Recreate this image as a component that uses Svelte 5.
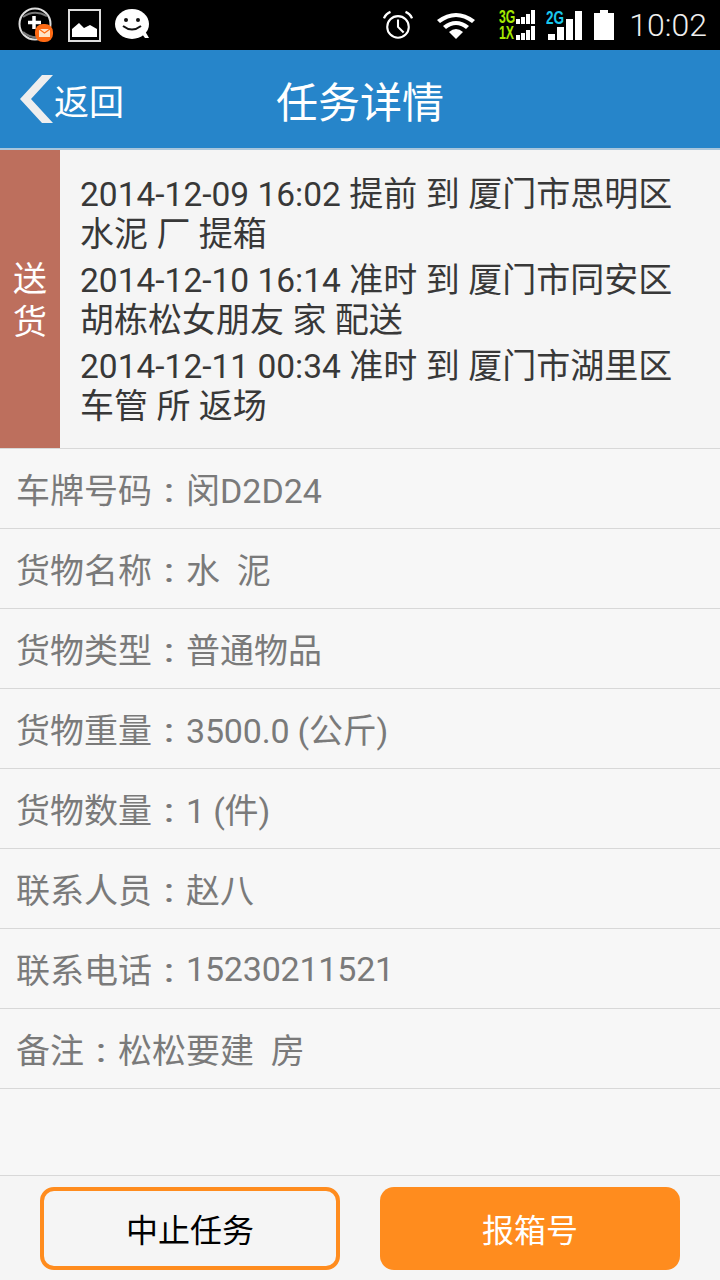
<script>
  const stops = [
    { time: '2014-12-09 16:02', first: ' 提前 到 厦门市思明区', second: '水泥 厂 提箱' },
    { time: '2014-12-10 16:14', first: ' 准时 到 厦门市同安区', second: '胡栋松女朋友 家 配送' },
    { time: '2014-12-11 00:34', first: ' 准时 到 厦门市湖里区', second: '车管 所 返场' }
  ];

  const rows = [
    { label: '车牌号码', value: '闵D2D24' },
    { label: '货物名称', value: '水  泥' },
    { label: '货物类型', value: '普通物品' },
    { label: '货物重量', value: '3500.0 (公斤)', tight: true },
    { label: '货物数量', value: '1 (件)', tight: true },
    { label: '联系人员', value: '赵八' },
    { label: '联系电话', value: '15230211521', tight: true },
    { label: '备注', value: '松松要建  房' }
  ];
</script>

<div class="screen">
  <div class="statusbar">
    <div class="status-left">
      <svg width="36" height="36" viewBox="0 0 36 36">
        <circle cx="17" cy="17" r="15.500" fill="none" stroke="#ddd" stroke-width="2" />
        <path d="M5 10Q16 2 29 9" fill="none" stroke="#777" stroke-width="2" />
        <path d="M5 25Q14 33 27 29" fill="none" stroke="#777" stroke-width="2" />
        <path d="M16 9v13M10 15.500h13" stroke="#fff" stroke-width="3.500" />
        <rect x="17" y="17" width="18" height="18" rx="8" fill="#ff6a13" />
        <rect x="21" y="22" width="11" height="8" fill="#ffe3c8" />
        <path d="M21 22l5.500 4 5.500-4" fill="none" stroke="#ff6a13" stroke-width="1.200" />
      </svg>
      <svg width="33" height="33" viewBox="0 0 33 33">
        <rect x="1" y="1" width="31" height="31" fill="none" stroke="#ddd" stroke-width="2" />
        <path d="M4 28V20l7-6 5 5 6-3 7 4v8z" fill="#fff" />
      </svg>
      <svg width="36" height="32" viewBox="0 0 36 32">
        <ellipse cx="17" cy="15" rx="17" ry="15" fill="#fff" />
        <path d="M27 25l3 4h4l-4-7z" fill="#fff" />
        <circle cx="11" cy="11" r="2" fill="#111" />
        <circle cx="23" cy="11" r="2" fill="#111" />
        <path d="M8 17q9 7 18 0" fill="none" stroke="#111" stroke-width="2" />
      </svg>
    </div>
    <div class="status-right">
      <svg class="alarm" width="30" height="30" viewBox="0 0 32 32">
        <circle cx="16" cy="18" r="11.500" fill="none" stroke="#fff" stroke-width="2.200" />
        <path d="M16 10v8l6 6" fill="none" stroke="#fff" stroke-width="2.200" />
        <path d="M1 9Q3 4 8 2M31 9Q29 4 24 2" fill="none" stroke="#fff" stroke-width="2.500" />
      </svg>
      <svg class="wifi" width="38" height="28" viewBox="0 0 38 28">
        <path d="M0 9Q19-5 38 9l-3 3Q19 0 3 12z" fill="#fff" />
        <path d="M6 15Q19 5 32 15l-3 3Q19 10 9 18z" fill="#fff" />
        <path d="M12 21Q19 15 26 21l-7 7z" fill="#fff" />
      </svg>
      <div class="net">
        <div class="net-row">
          <span class="net-label green">3G</span>
          <i class="b1"></i><i class="b2"></i><i class="b3"></i><i class="b4"></i>
        </div>
        <div class="net-row">
          <span class="net-label green">1X</span>
          <i class="b1"></i><i class="b2"></i><i class="b3"></i><i class="b4"></i>
        </div>
      </div>
      <div class="net2">
        <span class="net-label cyan">2G</span>
        <div class="bars">
          <i class="h1"></i><i class="h2"></i><i class="h3"></i><i class="h4"></i>
        </div>
      </div>
      <div class="battery"></div>
      <span class="clock">10:02</span>
    </div>
  </div>

  <header class="topbar">
    <div class="back">
      <svg width="34" height="48" viewBox="0 0 34 48">
        <path d="M33 0H22L0 24l22 24h11L11 24z" fill="#eeeeee" />
      </svg>
      <span>返回</span>
    </div>
    <h1>任务详情</h1>
  </header>

  <section class="summary">
    <div class="tag"><span>送</span><span>货</span></div>
    <div class="stops">
      {#each stops as stop}
        <p><span class="time">{stop.time}</span>{stop.first}<br />{stop.second}</p>
      {/each}
    </div>
  </section>

  <ul class="rows">
    {#each rows as row}
      <li>{row.label}<span class="colon">：</span><span class:tight={row.tight}>{row.value}</span></li>
    {/each}
  </ul>

  <footer class="actions">
    <button class="outline">中止任务</button>
    <button class="solid">报箱号</button>
  </footer>
</div>

<style>
  :global(body) {
    background: #f7f7f7;
  }

  .screen {
    width: 720px;
    height: 1280px;
    display: flex;
    flex-direction: column;
    background: #f7f7f7;
    font-family: Roboto, "Noto Sans CJK SC", sans-serif;
    overflow: hidden;
  }

  .statusbar {
    height: 50px;
    flex: none;
    background: #000;
    display: flex;
    justify-content: space-between;
    align-items: center;
    padding: 0 13px 0 18px;
  }

  .status-left, .status-right {
    display: flex;
    align-items: center;
  }

  .status-left {
    gap: 14px;
  }

  .alarm {
    margin-right: 24px;
  }

  .wifi {
    margin-right: 24px;
  }

  .net {
    display: flex;
    flex-direction: column;
    gap: 2px;
    margin-right: 10px;
  }

  .net-row {
    height: 14px;
    width: 37px;
    display: flex;
    align-items: flex-end;
    gap: 1px;
    padding-left: 17px;
    box-sizing: border-box;
    position: relative;
  }

  .net-row i {
    width: 4px;
    background: #fff;
  }

  .b1 { height: 5px; }
  .b2 { height: 7px; }
  .b3 { height: 10px; }
  .b4 { height: 14px; }

  .net-label {
    position: absolute;
    left: 0;
    top: 0;
    font-family: "Liberation Sans", sans-serif;
    font-weight: bold;
    font-size: 18px;
    line-height: 14px;
    transform: scaleX(0.68);
    transform-origin: left;
  }

  .green {
    color: #a4e800;
  }

  .cyan {
    color: #19c8ee;
    transform: scaleX(0.75);
    top: 1px;
  }

  .net2 {
    position: relative;
    width: 36px;
    height: 30px;
    margin-right: 12px;
  }

  .bars {
    height: 30px;
    padding-left: 2px;
    display: flex;
    align-items: flex-end;
    gap: 2px;
  }

  .bars i {
    width: 7px;
    background: #fff;
  }

  .h1 { height: 6px; }
  .h2 { height: 13px; }
  .h3 { height: 21px; }
  .h4 { height: 29px; }

  .battery {
    width: 20px;
    height: 27px;
    margin-top: 3px;
    background: #fff;
    position: relative;
    margin-right: 15px;
  }

  .battery::before {
    content: '';
    position: absolute;
    left: 6px;
    top: -3px;
    width: 8px;
    height: 3px;
    background: #fff;
  }

  .clock {
    color: #eee;
    font-size: 32px;
    font-weight: 300;
    line-height: 1;
  }

  .topbar {
    height: 100px;
    flex: none;
    box-sizing: border-box;
    background: #2685ca;
    border-bottom: 2px solid #a9c6dc;
    display: grid;
    grid-template-columns: 1fr auto 1fr;
    align-items: center;
    color: #fff;
  }

  .back {
    display: flex;
    align-items: center;
    padding-left: 20px;
    font-size: 35px;
  }

  h1 {
    margin: 0;
    font-size: 42px;
    font-weight: 400;
  }

  .summary {
    height: 299px;
    flex: none;
    box-sizing: border-box;
    display: flex;
    background: #f5f5f5;
    border-bottom: 1px solid #d8d8d8;
  }

  .tag {
    width: 60px;
    flex: none;
    box-sizing: border-box;
    padding-top: 3px;
    background: #bd6f5d;
    color: #fff;
    font-size: 34px;
    line-height: 43px;
    display: flex;
    flex-direction: column;
    align-items: center;
    justify-content: center;
  }

  .stops {
    padding: 24px 0 0 20px;
    font-size: 34px;
    line-height: 40px;
    color: #383838;
  }

  .stops p {
    margin: 0 0 6px;
  }

  .time {
    font-size: 33.500px;
    line-height: 1;
  }

  .rows {
    list-style: none;
    margin: 0;
    padding: 0;
  }

  .rows li {
    height: 80px;
    box-sizing: border-box;
    border-bottom: 1px solid #d8d8d8;
    padding-left: 16px;
    display: flex;
    align-items: center;
    font-size: 34px;
    color: #7a7a7a;
    white-space: pre;
  }

  .colon {
    font-family: "Noto Sans CJK TC", sans-serif;
    transform: translateY(3px) scaleY(0.8);
  }

  .tight {
    letter-spacing: -0.2px;
  }

  .actions {
    margin-top: auto;
    height: 105px;
    flex: none;
    box-sizing: border-box;
    background: #f5f5f5;
    border-top: 1px solid #d8d8d8;
    padding: 11px 40px 10px;
    display: flex;
    justify-content: space-between;
  }

  .actions button {
    width: 300px;
    height: 83px;
    padding: 0 0 2px;
    border-radius: 14px;
    font-family: inherit;
    font-size: 32px;
    box-sizing: border-box;
  }

  .outline {
    background: #f5f5f5;
    border: 4px solid #ff8c1e;
    color: #000;
  }

  .solid {
    background: #ff8c1e;
    border: none;
    color: #fff;
  }
</style>
